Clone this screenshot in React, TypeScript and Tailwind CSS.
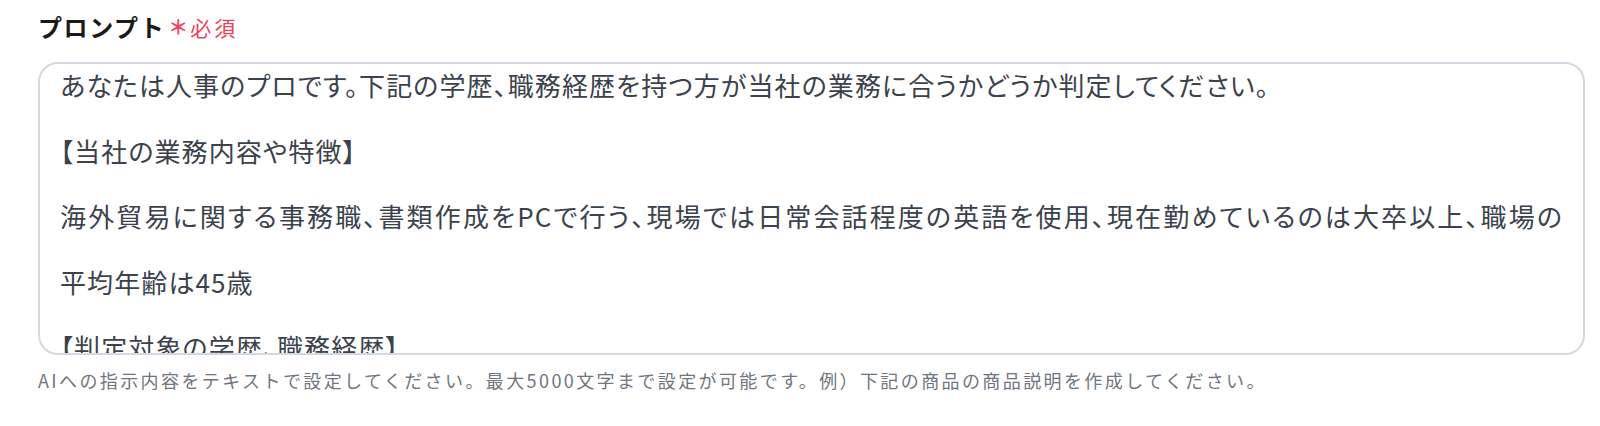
const LINES = [
  "あなたは人事のプロです。下記の学歴、職務経歴を持つ方が当社の業務に合うかどうか判定してください。",
  "【当社の業務内容や特徴】",
  "海外貿易に関する事務職、書類作成をPCで行う、現場では日常会話程度の英語を使用、現在勤めているのは大卒以上、職場の",
  "平均年齢は45歳",
  "【判定対象の学歴、職務経歴】",
];

// the 3rd line is a soft-wrapped one, so it is stretched to the full width
const WRAPPED = 2;

export default function App() {
  return (
    <div
      className="flex h-[426px] w-[1600px] flex-col bg-white pl-[38px] pr-[15px] pt-[12px]"
      style={{ fontFamily: '"Noto Sans CJK JP", "Noto Sans", sans-serif' }}
    >
      <div className="flex items-center leading-[30px]">
        <span className="text-[24px] font-bold tracking-[1.6px] text-[#1a1a1a]">プロンプト</span>
        <span className="ml-[3px] text-[20px] font-bold text-[#f0435a]">＊</span>
        <span className="ml-[2px] text-[21px] tracking-[3px] text-[#f0435a]">必須</span>
      </div>
      <div className="mt-[20px] h-[293px] overflow-hidden rounded-[20px] border-2 border-[#d3d9e0] px-[20px]">
        <div className="mt-[-12px] text-[26px] leading-[65.5px] tracking-[1.1px] text-[#3b424c] [font-feature-settings:'palt']">
          {LINES.map((line, i) =>
            i === WRAPPED ? (
              <div key={i} className="text-justify [text-align-last:justify]">
                {line}
              </div>
            ) : (
              <div key={i} className="whitespace-nowrap">
                {line}
              </div>
            )
          )}
        </div>
      </div>
      <p className="mt-[11px] whitespace-nowrap text-[18px] leading-[28px] tracking-[2.4px] text-[#6f7680]">
        AIへの指示内容をテキストで設定してください。最大5000文字まで設定が可能です。例）下記の商品の商品説明を作成してください。
      </p>
    </div>
  );
}
